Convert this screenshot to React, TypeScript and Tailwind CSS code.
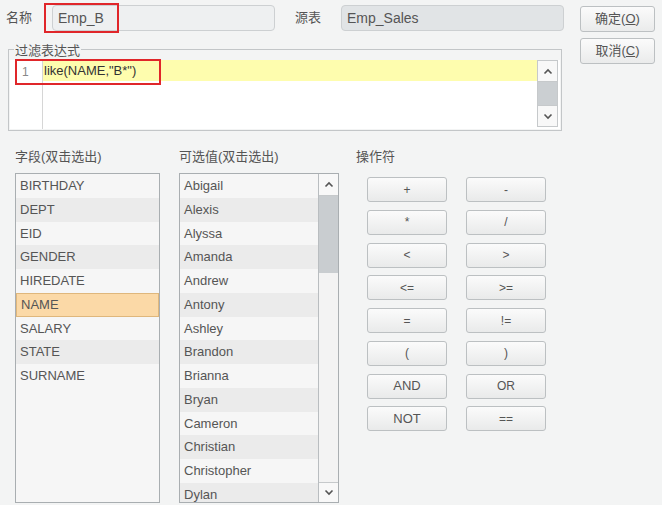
import React from 'react';

const fields = ['BIRTHDAY', 'DEPT', 'EID', 'GENDER', 'HIREDATE', 'NAME', 'SALARY', 'STATE', 'SURNAME'];
const values = [
  'Abigail', 'Alexis', 'Alyssa', 'Amanda', 'Andrew', 'Antony', 'Ashley',
  'Brandon', 'Brianna', 'Bryan', 'Cameron', 'Christian', 'Christopher', 'Dylan',
];
const ops = ['+', '-', '*', '/', '<', '>', '<=', '>=', '=', '!=', '(', ')', 'AND', 'OR', 'NOT', '=='];

const Up = () => (
  <svg width="10" height="7" viewBox="0 0 10 7">
    <path d="M1.5 5.5 L5 2 L8.5 5.5" fill="none" stroke="#555" strokeWidth="1.6" />
  </svg>
);
const Down = () => (
  <svg width="10" height="7" viewBox="0 0 10 7">
    <path d="M1.5 1.5 L5 5 L8.5 1.5" fill="none" stroke="#555" strokeWidth="1.6" />
  </svg>
);

const DlgButton: React.FC<{ label: string; hot: string }> = ({ label, hot }) => (
  <button className="w-[75px] h-[26px] rounded-[3px] border border-[#bcc0c2] bg-gradient-to-b from-[#fbfbfb] to-[#eaebeb] text-[13px] text-[#555] flex items-center justify-center">
    {label}(<span className="underline">{hot}</span>)
  </button>
);

export default function App() {
  return (
    <div
      className="w-[662px] h-[505px] overflow-hidden bg-[#f3f4f4] text-[#555]"
      style={{ fontFamily: '"Liberation Sans", Arial, "Noto Sans CJK SC", sans-serif' }}
    >
      {/* top */}
      <div className="flex pt-[5px]">
        <div className="w-[570px]">
          <div className="relative flex items-center h-[26px]">
            <span className="ml-[6px] w-[46px] text-[13px]">名称</span>
            <div className="w-[223px] h-[26px] rounded-[4px] border border-[#cdd0d2] bg-[#eef0f1] pl-[5px] flex items-center text-[14px] text-[#555]">
              Emp_B
            </div>
            <span className="ml-[20px] w-[46px] text-[13px]">源表</span>
            <div className="w-[223px] h-[26px] rounded-[4px] border border-[#cdd0d2] bg-[#e1e4e6] pl-[5px] flex items-center text-[14px] text-[#555]">
              Emp_Sales
            </div>
            <div className="absolute left-[44px] top-[-2px] w-[75px] h-[30px] border-2 border-[#e0262a]" />
          </div>

          <div className="relative ml-[8px] mt-[18px] w-[554px] h-[82px] border border-[#c3c6c8] pt-[10px] px-[1px] pb-[1px]">
            <span className="absolute left-[5px] top-[-7px] px-[1px] bg-[#f3f4f4] text-[13px] leading-[16px]">过滤表达式</span>
            <div className="flex h-full bg-white">
              <div className="w-[33px] border-r border-[#d6d6d6] text-[12px] text-[#888] pl-[12px] pt-[3px]">1</div>
              <div className="flex-1">
                <div className="h-[21px] bg-[#fefdae] pl-[1px] flex items-center text-[13px] text-[#333]">like(NAME,"B*")</div>
              </div>
              <div className="w-[21px] border border-[#c6c9cb] flex flex-col mr-[2px] mb-[2px]">
                <div className="h-[21px] flex items-center justify-center border-b border-[#c6c9cb] bg-[#f8f8f8]"><Up /></div>
                <div className="flex-1 bg-[#cbcfd2]" />
                <div className="h-[21px] flex items-center justify-center border-t border-[#c6c9cb] bg-[#f8f8f8]"><Down /></div>
              </div>
            </div>
            <div className="absolute left-[6px] top-[9px] w-[146px] h-[26px] border-2 border-[#e0262a]" />
          </div>
        </div>

        <div className="ml-[10px] flex flex-col gap-[6px] pt-[1px]">
          <DlgButton label="确定" hot="O" />
          <DlgButton label="取消" hot="C" />
        </div>
      </div>

      {/* lists */}
      <div className="flex pl-[15px] mt-[18px]">
        <div className="w-[145px]">
          <div className="h-[16px] leading-[16px] text-[13px] mb-[8px]">字段(双击选出)</div>
          <div className="h-[330px] border border-[#a9aeb1] bg-[#f6f6f6]">
            {fields.map((f, i) => (
              <div
                key={f}
                className={
                  'h-[23.75px] pl-[4px] flex items-center text-[13px] text-[#555] ' +
                  (f === 'NAME'
                    ? 'bg-[#fbd9a7] border border-[#dfb77c] pl-[3px]'
                    : i % 2 === 1
                    ? 'bg-[#ebebeb]'
                    : 'bg-[#f6f6f6]')
                }
              >
                {f}
              </div>
            ))}
          </div>
        </div>

        <div className="w-[160px] ml-[19px]">
          <div className="h-[16px] leading-[16px] text-[13px] mb-[8px]">可选值(双击选出)</div>
          <div className="h-[330px] border border-[#a9aeb1] bg-[#f6f6f6] flex overflow-hidden">
            <div className="flex-1">
              {values.map((v, i) => (
                <div
                  key={v}
                  className={
                    'h-[23.75px] pl-[4px] flex items-center text-[13px] text-[#555] ' +
                    (i % 2 === 1 ? 'bg-[#ebebeb]' : 'bg-[#f6f6f6]')
                  }
                >
                  {v}
                </div>
              ))}
            </div>
            <div className="w-[20px] border-l border-[#b9bdc0] flex flex-col bg-[#f3f3f3]">
              <div className="h-[22px] flex items-center justify-center border-b border-[#c6c9cb] bg-[#f8f8f8]"><Up /></div>
              <div className="h-[77px] bg-[#c9cdd0]" />
              <div className="flex-1" />
              <div className="h-[20px] flex items-center justify-center border-t border-[#c6c9cb] bg-[#f8f8f8]"><Down /></div>
            </div>
          </div>
        </div>

        <div className="ml-[17px]">
          <div className="h-[16px] leading-[16px] text-[13px] mb-[12px]">操作符</div>
          <div className="ml-[11px] grid grid-cols-[80px_80px] gap-x-[19px] gap-y-[7.75px]">
            {ops.map(o => (
              <button
                key={o}
                className={
                  'h-[25px] rounded-[3px] border border-[#bcc0c2] bg-gradient-to-b from-[#fbfbfb] to-[#e9eaea] text-[#555] flex items-center justify-center ' +
                  (o.length > 2 ? 'text-[13px]' : 'text-[12px]')
                }
              >
                {o}
              </button>
            ))}
          </div>
        </div>
      </div>
    </div>
  );
}
